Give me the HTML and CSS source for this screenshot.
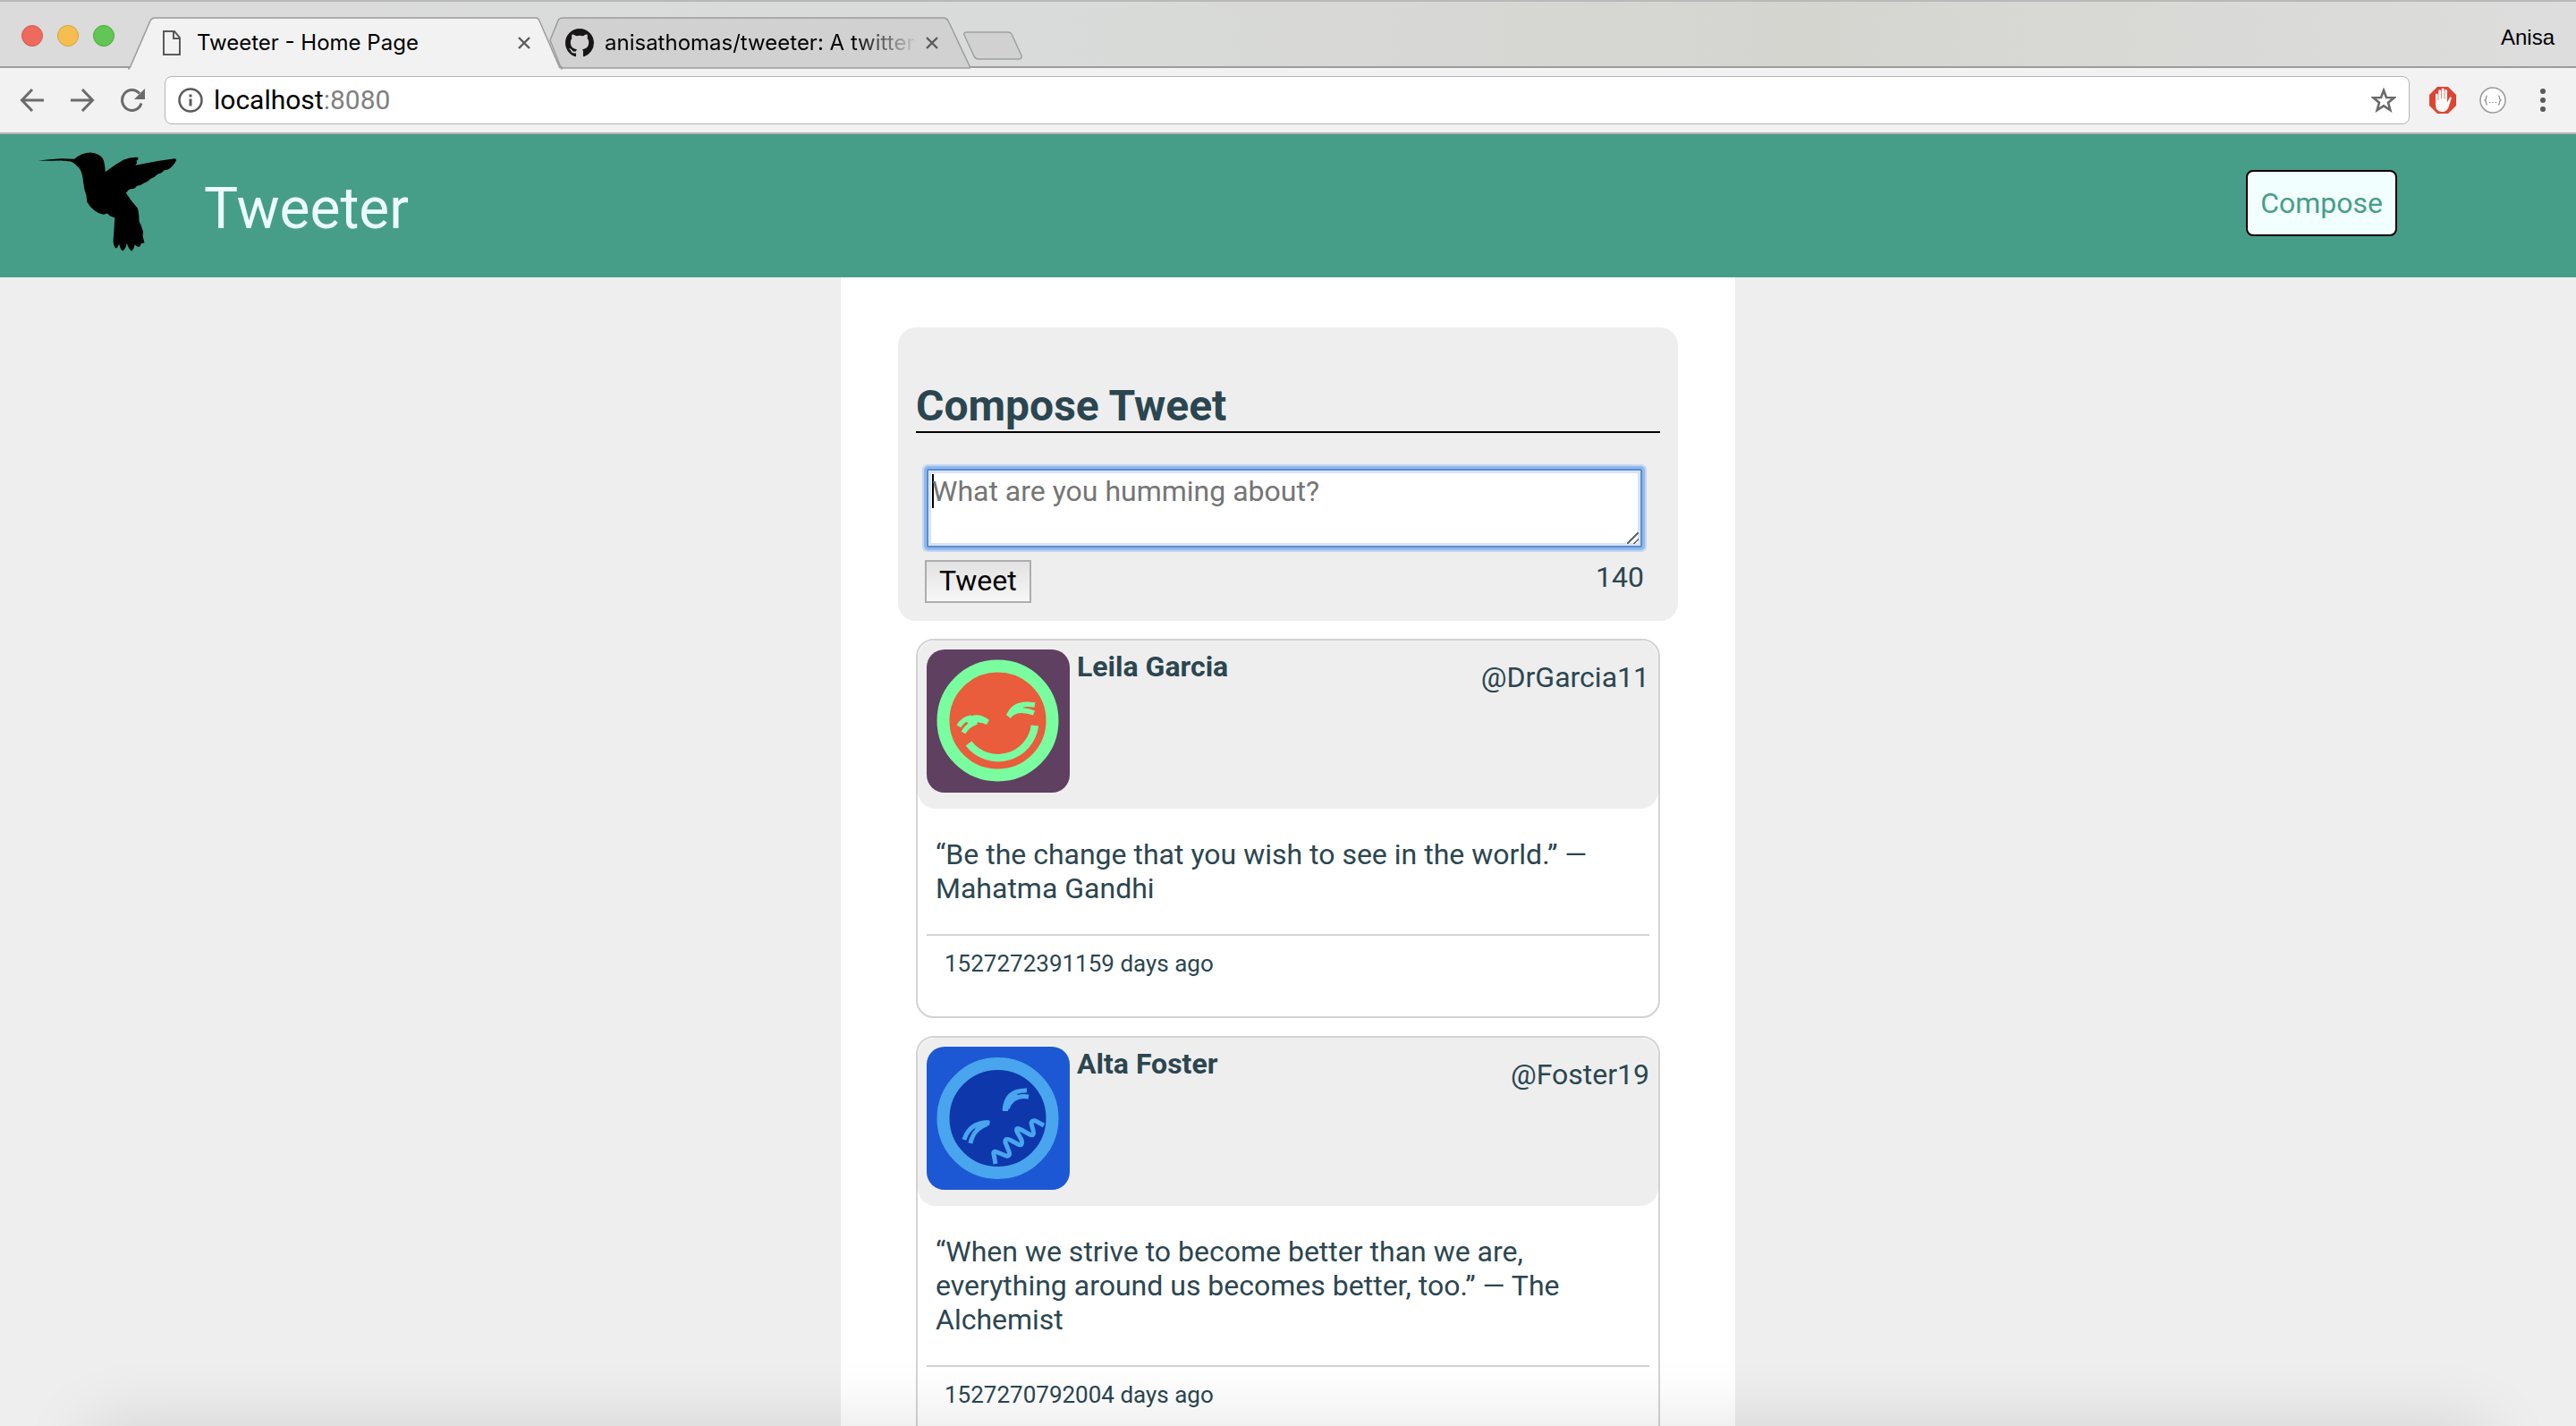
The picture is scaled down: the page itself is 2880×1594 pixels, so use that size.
FILE: index.html
```html
<!DOCTYPE html>
<html lang="en">
<head>
<meta charset="utf-8">
<title>Tweeter - Home Page</title>
<link rel="stylesheet" href="styles.css">
</head>
<body>
<div class="browser">
  <div class="tab-strip">
    <div class="window-controls">
      <button class="light light-close" aria-label="Close window"></button>
      <button class="light light-minimize" aria-label="Minimize window"></button>
      <button class="light light-zoom" aria-label="Zoom window"></button>
    </div>
    <div class="tab tab-active">
      <svg class="tab-shape" viewBox="0 0 486 58" preserveAspectRatio="none" aria-hidden="true"><path d="M0 57 Q2 57 3 54 L25 4 Q27 1 30 1 H456 Q459 1 460 4 L482 54 Q483 57 486 57" fill="#f2f2f2" stroke="#9c9c9c" stroke-width="1.5"/><path d="M2 57.5H484" stroke="#f2f2f2" stroke-width="2"/></svg>
      <svg class="file-icon" viewBox="0 0 20 28" aria-hidden="true"><path d="M1 1H13L19 8V27H1ZM12 1V9H19" fill="none" stroke="#5a5a5a" stroke-width="2"/></svg>
      <a class="tab-title" href="#">Tweeter - Home Page</a>
      <button class="tab-close" aria-label="Close tab"><svg viewBox="0 0 14 14"><path d="M1 1L13 13M13 1L1 13" stroke="#5a5a5a" stroke-width="2.4"/></svg></button>
    </div>
    <div class="tab tab-inactive">
      <svg class="tab-shape" viewBox="0 0 472 58" preserveAspectRatio="none" aria-hidden="true"><path d="M2 26 L11 4 Q12 1 16 1 H442 Q445 1 447 4 L472 57 H17 Q14 57 13 54 Z" fill="#d1d1d1" stroke="#9c9c9c" stroke-width="1.5"/></svg>
      <svg class="github-icon" viewBox="0 0 16 16" aria-hidden="true"><path fill="#171515" d="M8 0C3.58 0 0 3.58 0 8c0 3.54 2.29 6.53 5.47 7.59.4.07.55-.17.55-.38 0-.19-.01-.82-.01-1.49-2.01.37-2.53-.49-2.69-.94-.09-.23-.48-.94-.82-1.13-.28-.15-.68-.52-.01-.53.63-.01 1.08.58 1.23.82.72 1.21 1.87.87 2.33.66.07-.52.28-.87.51-1.07-1.78-.2-3.64-.89-3.64-3.95 0-.87.31-1.59.82-2.15-.08-.2-.36-1.02.08-2.12 0 0 .67-.21 2.2.82.64-.18 1.32-.27 2-.27s1.36.09 2 .27c1.53-1.04 2.2-.82 2.2-.82.44 1.1.16 1.92.08 2.12.51.56.82 1.27.82 2.15 0 3.07-1.87 3.75-3.65 3.95.29.25.54.73.54 1.48 0 1.07-.01 1.93-.01 2.2 0 .21.15.46.55.38A8.01 8.01 0 0 0 16 8c0-4.42-3.58-8-8-8z"/></svg>
      <a class="tab-title tab-title-faded" href="#">anisathomas/tweeter: A twitter</a>
      <button class="tab-close" aria-label="Close tab"><svg viewBox="0 0 14 14"><path d="M1 1L13 13M13 1L1 13" stroke="#5a5a5a" stroke-width="2.4"/></svg></button>
    </div>
    <button class="new-tab" aria-label="New tab"><svg viewBox="0 0 66 32"><path d="M4 1H50Q53 1 54 3L65 27Q66 31 62 31H17Q14 31 12 28L1 4Q0 1 4 1Z" fill="#d1d1d1" stroke="#a0a0a0" stroke-width="1.5"/></svg></button>
    <span class="profile">Anisa</span>
  </div>
  <div class="toolbar">
    <div class="nav-buttons">
      <button class="nav-button" aria-label="Back"><svg viewBox="0 0 28 28"><path d="M27 14H3M14 2L2.500 14L14 26" fill="none" stroke="#6a6a6a" stroke-width="3"/></svg></button>
      <button class="nav-button" aria-label="Forward"><svg viewBox="0 0 28 28"><path d="M1 14H25M14 2L25.500 14L14 26" fill="none" stroke="#6a6a6a" stroke-width="3"/></svg></button>
      <button class="nav-button" aria-label="Reload"><svg viewBox="0 0 28 28"><path d="M24 17.500A11 11.500 0 1 1 22 6.500" fill="none" stroke="#6a6a6a" stroke-width="3"/><path d="M28 1V13H16Z" fill="#6a6a6a"/></svg></button>
    </div>
    <div class="address-bar">
      <svg class="info-icon" viewBox="0 0 28 28" aria-hidden="true"><circle cx="14" cy="14" r="12.500" fill="none" stroke="#5a5a5a" stroke-width="2.500"/><path d="M14 12.500V20.500M14 7.500V10.500" stroke="#5a5a5a" stroke-width="3"/></svg>
      <span class="address">localhost<span class="port">:8080</span></span>
      <button class="nav-button star" aria-label="Bookmark"><svg viewBox="0 0 28 28"><path d="M14 3L17 11L25.500 11.300L19 16.700L21.300 25L14 20.300L6.700 25L9 16.700L2.500 11.300L11 11Z" fill="none" stroke="#6a6a6a" stroke-width="2.600"/></svg></button>
    </div>
    <div class="extensions">
      <button class="extension" aria-label="AdBlock"><svg viewBox="0 0 30 30"><path d="M9 0H21L30 9V21L21 30H9L0 21V9Z" fill="#de4431"/><path d="M7 9Q7 7.500 8.300 7.500T9.700 9V15H10.300V5Q10.300 3.300 11.700 3.300T13.100 5V13.500H13.700V3Q13.700 1.500 15.200 1.500T16.700 3V13.500H17.300V4.500Q17.300 3 18.600 3T20 4.500V17.500L22.500 12.500Q23.300 11 25 12L21.500 23Q19.500 28 14.500 28Q7 28 7 20Z" fill="#fafafa"/></svg></button>
      <button class="extension" aria-label="JSON formatter"><svg viewBox="0 0 30 30"><circle cx="15" cy="15" r="14" fill="#fff" stroke="#9a9a9a" stroke-width="1.500"/><path d="M9 10Q7.500 10 7.500 12V13.500L6 15L7.500 16.500V18Q7.500 20 9 20M21 10Q22.500 10 22.500 12V13.500L24 15L22.500 16.500V18Q22.500 20 21 20M11 17.500h1.500M14.300 17.500h1.500M17.600 17.500h1.500" fill="none" stroke="#8a8a8a" stroke-width="1.200"/></svg></button>
      <button class="extension" aria-label="Menu"><svg viewBox="0 0 30 30"><g fill="#5a5a5a"><circle cx="15" cy="5" r="3"/><circle cx="15" cy="15" r="3"/><circle cx="15" cy="25" r="3"/></g></svg></button>
    </div>
  </div>
</div>

<header class="site-header">
  <svg class="logo" viewBox="126 84 470 342" role="img" aria-label="Hummingbird"><path d="M128 118L165 114L205 111L250 113Q275 91 305 91Q335 94 346 112Q353 125 354 156Q385 133 415 116Q440 105 465 107L464 115L459 119L461 126L455 134Q520 119 588 111Q595 112 592 120Q582 137 572 144Q562 151 552 150Q547 160 530 164Q522 174 507 179Q497 191 485 193Q475 202 461 203Q453 215 440 213Q430 216 424 227L444 256L463 278Q468 293 468 322L475 337L482 358L480 370L486 395L475 397Q472 408 467 409Q458 407 454 400Q450 416 443 423Q432 416 427 396Q423 416 413 422Q404 418 401 398Q397 411 390 413Q381 408 381 385L384 345L386 311L369 304L361 296Q353 300 344 299Q312 290 293 258L290 235Q282 215 280 190Q276 150 264 141Q255 128 238 121L205 118L165 119Z"/></svg>
  <h1 class="site-title">Tweeter</h1>
  <button class="compose-button">Compose</button>
</header>

<main class="container">
  <section class="new-tweet">
    <h2 class="new-tweet-title">Compose Tweet</h2>
    <form class="tweet-form">
      <textarea class="tweet-input" rows="2" aria-label="Tweet text" placeholder="What are you humming about?" autofocus></textarea>
      <div class="form-footer">
        <button class="tweet-button" type="submit">Tweet</button>
        <span class="counter">140</span>
      </div>
    </form>
  </section>

  <article class="tweet">
    <header class="tweet-header">
      <svg class="avatar" viewBox="0 0 160 160" role="img" aria-label="Leila Garcia">
        <rect width="160" height="160" fill="#5f4060"/>
        <circle cx="79.500" cy="79.500" r="61" fill="#e95c3c" stroke="#7afd9f" stroke-width="14"/>
        <path d="M47 105A41.500 41.500 0 0 0 121 85" fill="none" stroke="#7afd9f" stroke-width="8.500"/>
        <path d="M36 86Q40 78 50 76M41 93Q46 84 56 81M92 74Q98 58 121 62M92 74Q102 64 120 71" fill="none" stroke="#7afd9f" stroke-width="5.500"/>
        <path d="M42 78Q57 68 70 79L67 84Q58 79 48 84ZM89 73Q96 60 109 59L108 66Q99 68 94 77Z" fill="#7afd9f"/>
      </svg>
      <h3 class="tweet-name">Leila Garcia</h3>
      <span class="tweet-handle">@DrGarcia11</span>
    </header>
    <p class="tweet-text">“Be the change that you wish to see in the world.” — Mahatma Gandhi</p>
    <footer class="tweet-footer">1527272391159 days ago</footer>
  </article>

  <article class="tweet">
    <header class="tweet-header">
      <svg class="avatar" viewBox="0 0 160 160" role="img" aria-label="Alta Foster">
        <rect width="160" height="160" fill="#1d58d4"/>
        <circle cx="79.500" cy="80" r="61" fill="#0e37ab" stroke="#48a5ee" stroke-width="14"/>
        <path d="M77 131L75 120Q74 116 79 118L89 122Q94 123 92 117L88 107Q87 102 93 104L102 109Q108 112 106 104L101 95Q99 89 106 93L115 98Q121 101 119 93L117 86Q117 82 122 83L131 88" fill="none" stroke="#48a5ee" stroke-width="5"/>
        <path d="M42 104Q48 84 70 85M49 108Q52 92 67 87M87 71Q89 48 112 49M90 69Q96 53 114 56" fill="none" stroke="#48a5ee" stroke-width="5"/>
        <path d="M56 85Q63 81 71 83L70 88Q60 90 53 97ZM85 72Q86 56 97 50L102 54Q92 61 91 72Z" fill="#48a5ee"/>
      </svg>
      <h3 class="tweet-name">Alta Foster</h3>
      <span class="tweet-handle">@Foster19</span>
    </header>
    <p class="tweet-text">“When we strive to become better than we are, everything around us becomes better, too.” — The Alchemist</p>
    <footer class="tweet-footer">1527270792004 days ago</footer>
  </article>
</main>
<div class="bottom-shade"></div>
</body>
</html>
```
FILE: styles.css
```css
* {
  box-sizing: border-box;
}

html,
body {
  height: 100%;
  overflow: hidden;
}

body {
  display: flex;
  flex-direction: column;
  margin: 0;
  background: #eee;
  color: #2b4650;
  font-family: Roboto, sans-serif;
  font-size: 32px;
  line-height: 38px;
}

button {
  margin: 0;
  padding: 0;
  border: 0;
  background: none;
  font: inherit;
}

svg {
  display: block;
}

/* Browser window */

.browser {
  flex: none;
  background: #f2f2f2;
  border-bottom: 2px solid #b4b4b4;
}

.tab-strip {
  display: flex;
  height: 76px;
  padding: 17px 24px 0;
  border-top: 2px solid #b9b9b9;
  background: linear-gradient(90deg, #dadbda, #d9dbda 40%, #d5d5d0 70%, #dddddd);
  box-shadow: inset 0 -2px #9c9c9c;
  color: #000;
  font-family: Inter, sans-serif;
  font-size: 24px;
  line-height: 32px;
}

.window-controls {
  display: flex;
  gap: 16px;
  width: 119px;
  padding-top: 9px;
}

.light {
  width: 24px;
  height: 24px;
  border: 1px solid;
  border-radius: 50%;
}

.light-close {
  background: #ee6a5f;
  border-color: #d5564c;
}

.light-minimize {
  background: #f6be50;
  border-color: #d9a03b;
}

.light-zoom {
  background: #61c654;
  border-color: #4da73f;
}

.tab {
  position: relative;
  display: flex;
  flex: none;
  height: 58px;
}

.tab-shape {
  position: absolute;
  inset: 0;
  width: 100%;
  height: 100%;
}

.tab > :not(.tab-shape) {
  position: relative;
}

.tab-active {
  z-index: 1;
  width: 486px;
  height: 59px;
  padding: 13px 36px 0 39px;
}

.tab-inactive {
  width: 472px;
  margin-left: -16px;
  padding: 13px 36px 0 19px;
}

.file-icon {
  width: 20px;
  height: 28px;
  margin: 2px 18px 0 0;
}

.github-icon {
  width: 32px;
  height: 32px;
  margin-right: 12px;
}

.tab-title {
  flex: 1;
  overflow: hidden;
  color: #000;
  text-decoration: none;
  white-space: nowrap;
}

.tab-title-faded {
  flex: none;
  width: 346px;
  margin-right: 13px;
  background: linear-gradient(90deg, #000 80%, #c4c4c4);
  background-clip: text;
  color: transparent;
}

.tab-close {
  width: 14px;
  height: 14px;
  margin-top: 9px;
}

.new-tab {
  width: 66px;
  height: 32px;
  margin: 16px auto 0 -8px;
}

.profile {
  padding-top: 7px;
  font-family: "Liberation Sans", sans-serif;
}

.toolbar {
  display: flex;
  align-items: center;
  gap: 22px;
  height: 72px;
  padding: 0 22px;
}

.nav-buttons {
  display: flex;
  gap: 28px;
}

.nav-button {
  width: 28px;
  height: 28px;
}

.address-bar {
  display: flex;
  flex: 1;
  align-items: center;
  gap: 12px;
  height: 54px;
  padding: 0 14px;
  border: 1px solid #b4b4b4;
  border-radius: 8px;
  background: #fff;
  color: #000;
  font-size: 30px;
}

.info-icon {
  width: 28px;
  height: 28px;
}

.address {
  flex: 1;
}

.port {
  color: #808080;
}

.extensions {
  display: flex;
  gap: 26px;
}

.extension {
  width: 30px;
  height: 30px;
}

/* Site header */

.site-header {
  display: flex;
  flex: none;
  align-items: flex-start;
  height: 160px;
  padding: 18px 200px 0 42px;
  background: #479e88;
}

.logo {
  width: 156px;
  height: 114px;
}

.site-title {
  flex: 1;
  margin: 28px 0 0 30px;
  color: #ecfbff;
  font-size: 64px;
  font-weight: 400;
  line-height: 76px;
}

.compose-button {
  height: 74px;
  margin-top: 22px;
  padding: 0 14px;
  border: 2px solid #000;
  border-radius: 8px;
  background: #f2ffff;
  color: #479e88;
}

/* Timeline */

.container {
  display: flex;
  flex: 1 0 auto;
  flex-direction: column;
  gap: 20px;
  width: 1000px;
  margin: 0 auto;
  padding: 56px 64px;
  background: #fff;
}

.new-tweet {
  padding: 60px 20px 20px;
  border-radius: 20px;
  background: #eee;
}

.new-tweet-title {
  margin: 0 0 40px;
  border-bottom: 2px solid #000;
  font-size: 48px;
  line-height: 56px;
}

.tweet-form {
  padding: 0 18px 0 10px;
}

.tweet-input {
  display: block;
  width: calc(100% - 4px);
  margin: 0 2px;
  padding: 4px;
  border: 2px solid #5f8ccc;
  border-radius: 2px;
  outline: none;
  box-shadow: 0 0 0 3px #8fb8ee, 0 0 0 5px #c4d7f1, inset 0 0 0 3px #d5e4fa;
  background: #fff;
  font: inherit;
  resize: vertical;
}

/* Insertion point shown while the box is empty */
.tweet-input:placeholder-shown {
  background: linear-gradient(#000, #000) 4px 4px / 2px 38px no-repeat #fff;
  caret-color: transparent;
}

.tweet-input::placeholder {
  color: #757575;
}

.tweet-input::-webkit-resizer {
  background: linear-gradient(135deg, transparent 46%, #666 46% 54%, transparent 54% 76%, #666 76% 84%, transparent 84%) 0 0 / 13px 13px no-repeat;
}

.form-footer {
  display: flex;
  justify-content: space-between;
  padding-top: 14px;
}

.tweet-button {
  height: 48px;
  padding: 0 14px 2px;
  border: 2px solid #adadad;
  background: linear-gradient(#e2e2e2, #f7f7f7);
  color: #000;
}

.tweet {
  margin: 0 20px;
  padding-bottom: 12px;
  border: 2px solid #d3d3d3;
  border-radius: 20px;
}

.tweet-header {
  display: flex;
  align-items: flex-start;
  gap: 8px;
  height: 188px;
  padding: 10px;
  border-radius: 20px;
  background: #eee;
}

.avatar {
  width: 160px;
  height: 160px;
  border-radius: 20px;
}

.tweet-name {
  flex: 1;
  margin: 0;
  font-size: 32px;
}

.tweet-handle {
  padding-top: 12px;
}

.tweet-text {
  margin: 32px 20px;
}

.tweet-footer {
  margin: 0 10px;
  padding: 16px 20px 32px;
  border-top: 2px solid #d3d3d3;
  font-size: 26px;
  line-height: 30px;
}

/* Soft shadow rising from the bottom edge of the window */
.bottom-shade {
  position: fixed;
  right: 100px;
  bottom: -100px;
  left: 100px;
  height: 100px;
  box-shadow: 0 0 80px rgba(0, 0, 0, 0.12);
  pointer-events: none;
}
```
